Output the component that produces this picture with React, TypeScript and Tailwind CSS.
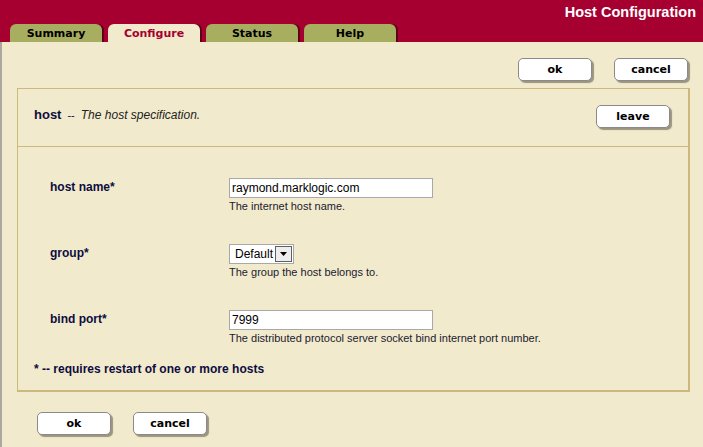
import React from "react";

const Btn = ({ children }: { children: React.ReactNode }) => (
  <div className="w-[74px] h-[23px] rounded-[5px] border border-[#8a8a8a] bg-white shadow-[2px_2px_1px_#9a9480] flex items-center justify-center text-[11px] font-bold text-black [font-family:'DejaVu_Sans',sans-serif] leading-none">
    {children}
  </div>
);

const Tab = ({ label, active }: { label: string; active?: boolean }) => (
  <div
    className={`w-[92px] h-[18px] rounded-t-[6px] flex items-center justify-center text-[11px] font-bold [font-family:'DejaVu_Sans',sans-serif] leading-none ${
      active
        ? "bg-[#f2eacc] text-[#a50030] shadow-[2px_0_0_#5e0018]"
        : "bg-[#a8ae60] text-black shadow-[2px_0_0_#5e0018]"
    }`}
  >
    {label}
  </div>
);

export default function App() {
  return (
    <div className="w-[703px] h-[447px] bg-[#f2eacc] [font-family:'Liberation_Sans',Arial,sans-serif] overflow-hidden">
      <div className="h-[42px] bg-[#a50030] flex flex-col">
        <div className="h-[24px] flex items-start justify-end pr-[7px] pt-[4px]">
          <span className="text-white font-bold text-[14.5px] leading-[16px]">Host Configuration</span>
        </div>
        <div className="flex gap-[6px] pl-[10px] items-end">
          <Tab label="Summary" />
          <Tab label="Configure" active />
          <Tab label="Status" />
          <Tab label="Help" />
        </div>
      </div>
      <div className="border-l-2 border-[#a9a9a0] h-[405px] flex flex-col">
        <div className="flex justify-end gap-[22px] pr-[15px] pt-[16px]">
          <Btn>ok</Btn>
          <Btn>cancel</Btn>
        </div>
        <div className="ml-[15px] mr-[13px] mt-[7px] border-[#cdb97e] border-t-[1px] border-l-[1px] border-r-[2px] border-b-[2px] flex flex-col">
          <div className="h-[58px] border-b border-[#cdb97e] flex items-start justify-between pl-[16px] pr-[18px]">
            <div className="flex items-baseline text-[#0d0d40] pt-[16px]">
              <span className="font-bold text-[13px]">host</span>
              <span className="text-[11px] ml-[6px] mr-[6px]">--</span>
              <span className="italic text-[12px] text-[#222]">The host specification.</span>
            </div>
            <div className="pt-[16px]">
              <Btn>leave</Btn>
            </div>
          </div>
          <div className="pt-[31px] pl-[32px] pb-[14px] flex flex-col">
            {[
              { label: "host name", value: "raymond.marklogic.com", help: "The internet host name.", kind: "input" },
              { label: "group", value: "Default", help: "The group the host belongs to.", kind: "select" },
              { label: "bind port", value: "7999", help: "The distributed protocol server socket bind internet port number.", kind: "input" },
            ].map((r) => (
              <div key={r.label} className="h-[66px] flex">
                <div className="w-[179px] pt-[2px] text-[12px] font-bold text-[#0d0d40] leading-[14px]">
                  {r.label}*
                </div>
                <div className="flex flex-col">
                  {r.kind === "input" ? (
                    <div className="w-[204px] h-[20px] bg-white border border-[#a8a8a8] flex items-center pl-[2px] text-[12px] text-black">
                      {r.value}
                    </div>
                  ) : (
                    <div className="w-[65px] h-[20px] bg-white border border-[#a8a8a8] flex items-center justify-between pl-[5px] pr-[1px] text-[12px] text-black">
                      <span>{r.value}</span>
                      <div className="w-[17px] h-[16px] border border-[#606060] bg-[#eeeeee] flex items-center justify-center">
                        <svg width="7" height="4" viewBox="0 0 7 4">
                          <path d="M0 0h7L3.5 4z" fill="#000" />
                        </svg>
                      </div>
                    </div>
                  )}
                  <div className="text-[11px] leading-[14px] text-[#1a1a30] mt-[1px]">{r.help}</div>
                </div>
              </div>
            ))}
            <div className="-ml-[16px] mt-[-14px] text-[12px] font-bold text-[#0d0d40] leading-[14px]">
              * -- requires restart of one or more hosts
            </div>
          </div>
        </div>
        <div className="flex gap-[22px] pl-[35px] mt-[20px]">
          <Btn>ok</Btn>
          <Btn>cancel</Btn>
        </div>
      </div>
    </div>
  );
}
